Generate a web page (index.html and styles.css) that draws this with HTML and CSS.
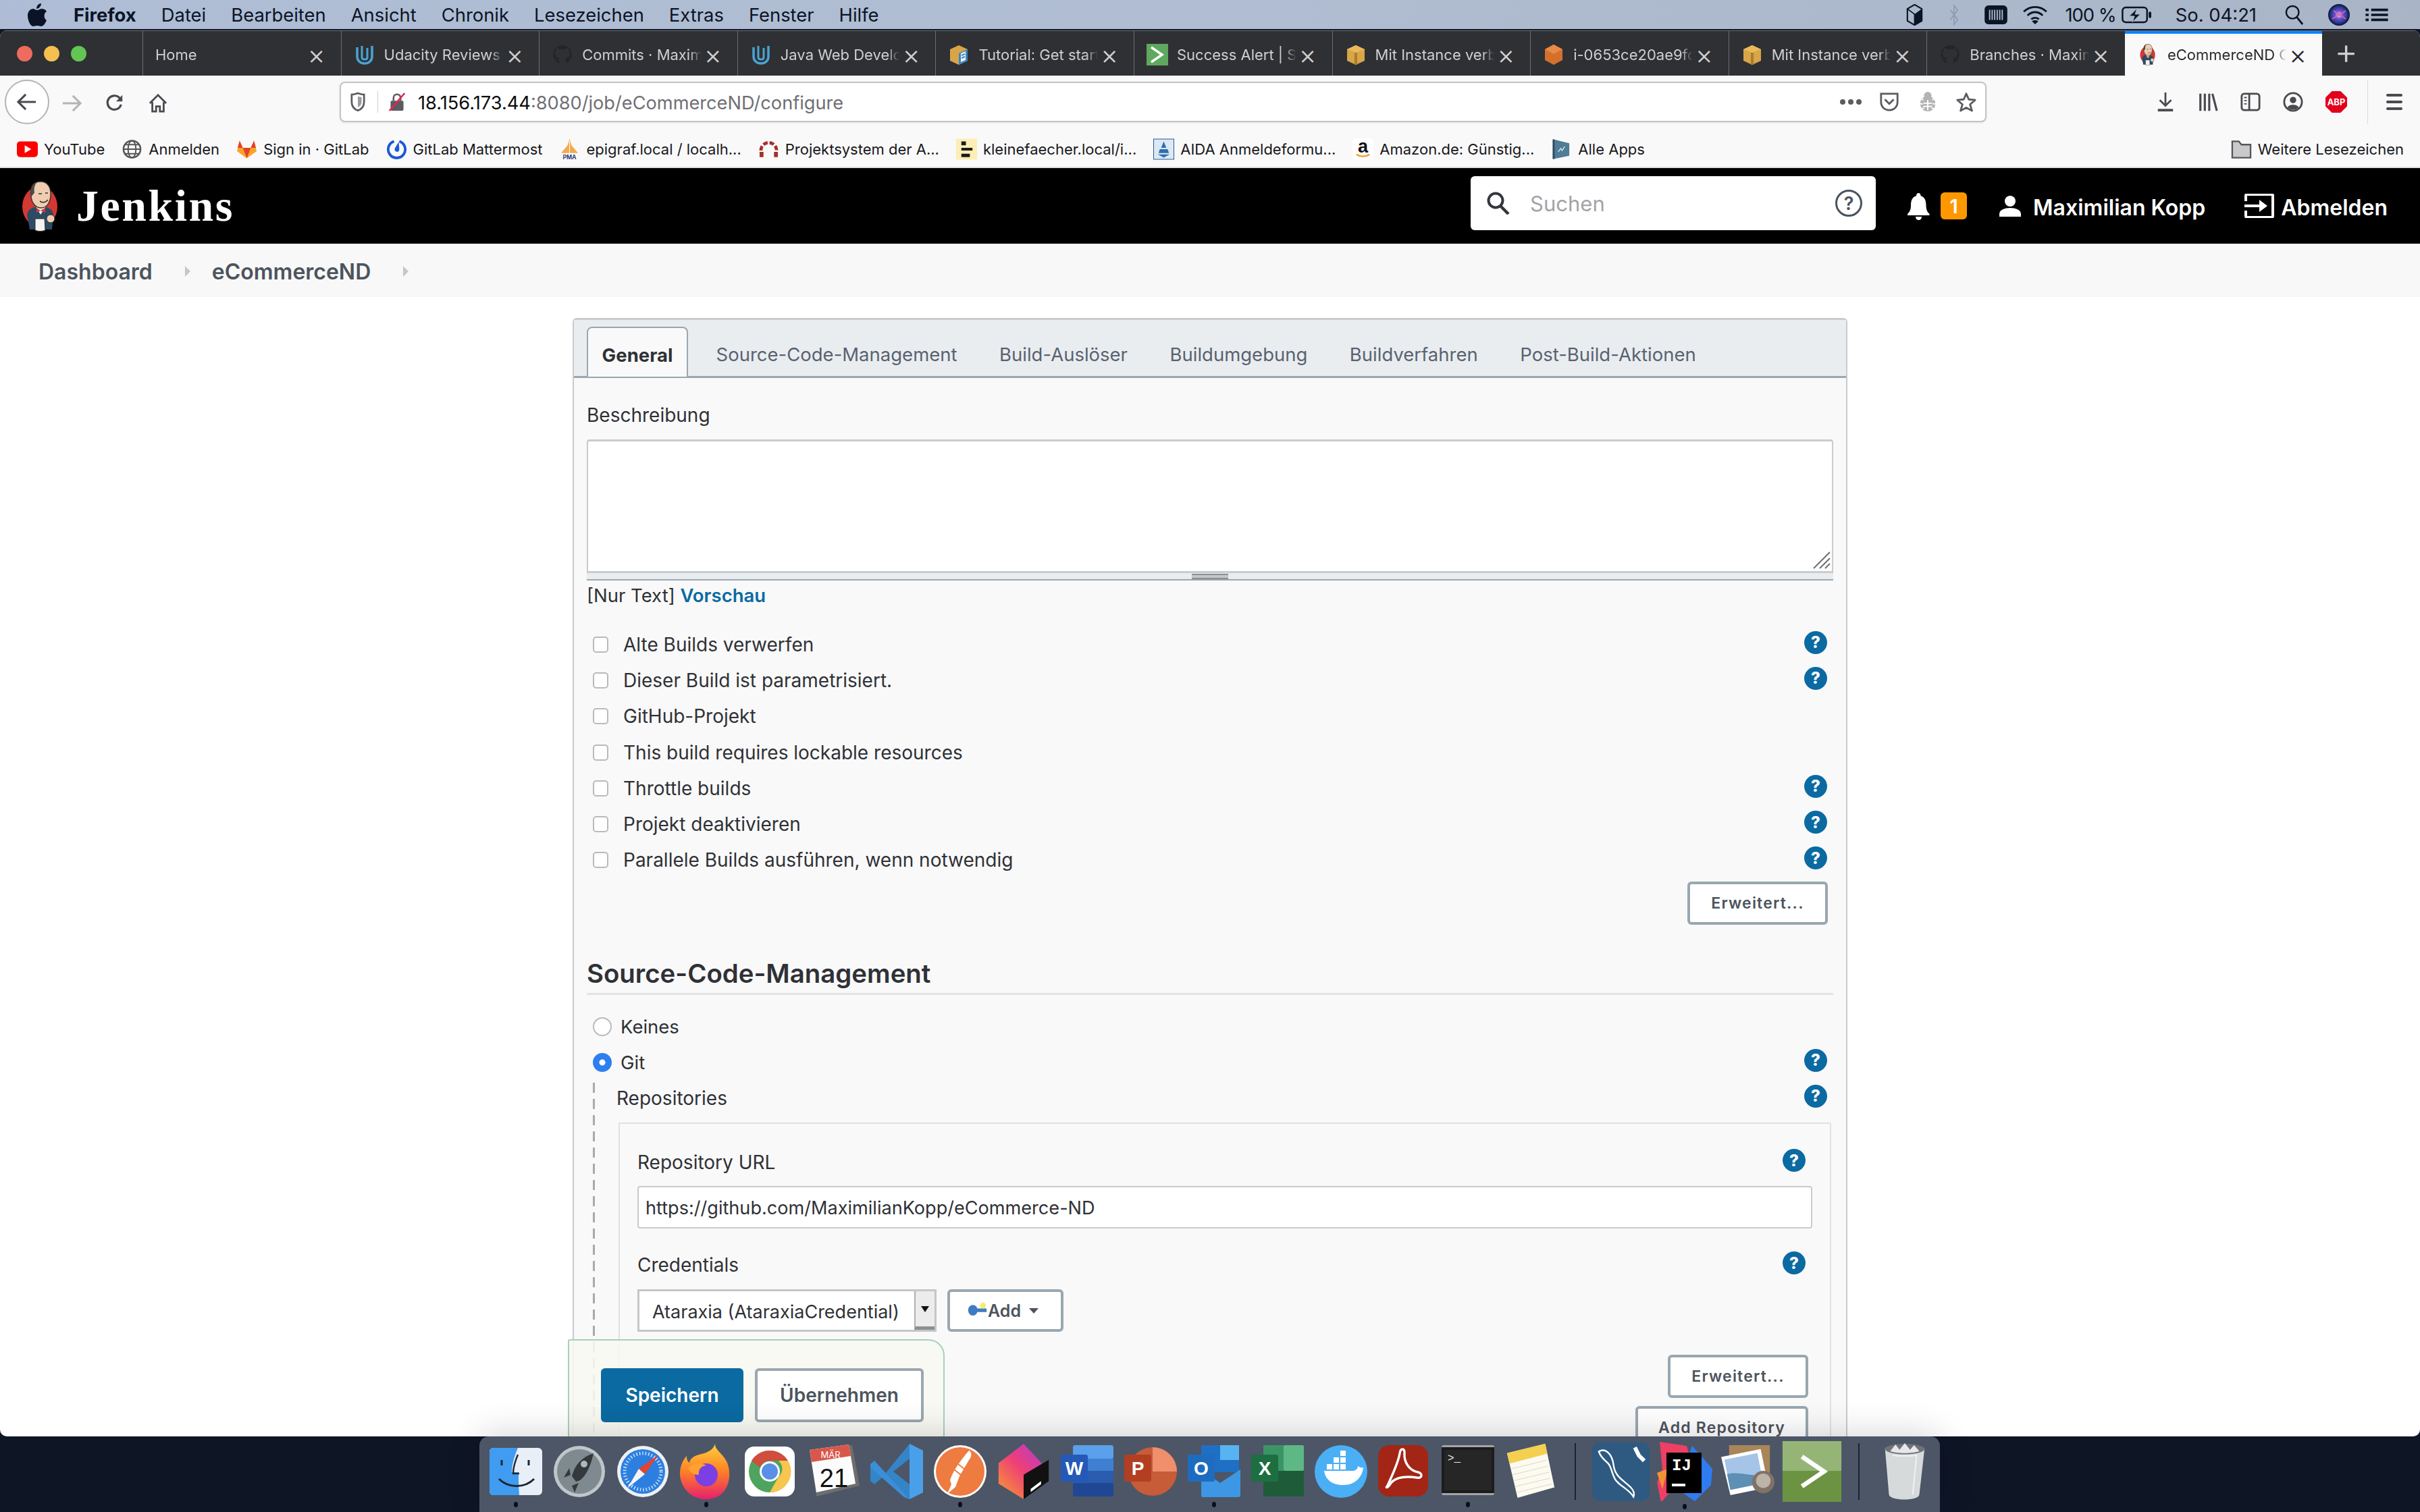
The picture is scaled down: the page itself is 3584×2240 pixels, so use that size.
FILE: index.html
```html
<!DOCTYPE html>
<html lang="de">
<head>
    <meta charset="UTF-8">
    <meta name="viewport" content="width=device-width, initial-scale=1.0">
    <title>eCommerceND Config - Jenkins</title>
    <link rel="stylesheet" href="styles.css">
</head>
<body>
<svg class="defs" width="0" height="0">
    <defs>
        <symbol id="fav-udacity" viewBox="0 0 32 32"><path d="M5 5v14c0 6 5 10 11 10s11-4 11-10V3" fill="none" stroke="#4aa3d4" stroke-width="3.5"/><path d="M12 3v17c0 2 2 3 4 3s4-1 4-3V6" fill="none" stroke="#4aa3d4" stroke-width="3"/></symbol>
        <symbol id="fav-github" viewBox="0 0 32 32"><path d="M16 2a14 14 0 0 0-5 27v-5c-4 1-5-2-5-2-1-2-2-2-2-2 2 0 3 2 3 2 1 2 3 1 4 1 0-1 1-2 1-2-3 0-7-2-7-7 0-2 1-3 2-4 0-1 0-2 0-4 0 0 2 0 4 2h10c2-2 4-2 4-2 0 2 0 3 0 4 1 1 2 2 2 4 0 5-4 7-7 7 0 0 1 1 1 3v5A14 14 0 0 0 16 2z" fill="#232629"/></symbol>
        <symbol id="fav-box" viewBox="0 0 32 32"><path d="M16 2l13 6v17l-13 6-13-6V8z" fill="#d8a548"/><path d="M16 2l13 6-13 5-13-5z" fill="#eab95c"/><path d="M14 13h4v18h-4z" fill="#a97e2e"/></symbol>
        <symbol id="fav-doc" viewBox="0 0 32 32"><path d="M16 2l13 6v17l-13 6-13-6V8z" fill="#d8a548"/><path d="M16 14l13-6v17l-13 6z" fill="#3b86c4"/><path d="M19 14l7-3v13l-7 3z" fill="#eef4f8"/><path d="M20 17l5-2M20 21l5-2" stroke="#3b86c4" stroke-width="2"/></symbol>
        <symbol id="fav-alert" viewBox="0 0 32 32"><rect width="32" height="32" fill="#5fa85f"/><path d="M7 5l16 11L7 27" fill="none" stroke="#fff" stroke-width="3.5"/></symbol>
        <symbol id="fav-cube" viewBox="0 0 32 32"><path d="M16 1l13 7v16l-13 7-13-7V8z" fill="#d4702c"/><path d="M16 1l13 7-13 7-13-7z" fill="#e88a48"/></symbol>
        <symbol id="jenkins" viewBox="0 0 54 75">
            <ellipse cx="26" cy="38" rx="26" ry="30" fill="#d33833"/>
            <path d="M7 50c2-9 9-12 19-12s20 3 20 13l-2 21H11z" fill="#2b4a66"/>
            <path d="M20 38l7 12 8-12z" fill="#f0ece4"/>
            <path d="M21 40l6 4 7-4v7l-7-3-6 3z" fill="#d33833"/>
            <path d="M13 23C11 8 17 1 27 1c10 0 16 8 15 21-1 11-6 18-14 18-8 0-14-7-15-17z" fill="#f0cdb0" stroke="#33302e" stroke-width="1.4"/>
            <path d="M13 24C11 10 15 3 22 2c-4 4-5 10-4 16-2 1-3 4-5 6z" fill="#4b4a48"/>
            <path d="M24 19h5M34 18h4M26 30c4 3 9 2 12-2" fill="none" stroke="#33302e" stroke-width="1.6"/>
            <path d="M19 56h14l1 17c-4 2-11 2-15 0z" fill="#f5f3ef" stroke="#33302e" stroke-width="1"/>
            <circle cx="42" cy="56" r="6" fill="#f0cdb0" stroke="#33302e" stroke-width="1"/>
        </symbol>
    </defs>
</svg>

<div class="screen">
    <!-- mac menu bar -->
    <header class="menubar">
        <svg class="apple" viewBox="0 0 28 34"><path d="M20 0c0 4-3 8-7 8 0-4 3-8 7-8zM14 10c2 0 4-2 7-2 3 0 5 1 7 4-5 3-4 11 0 13-2 5-5 9-8 9-2 0-3-1-6-1s-4 1-6 1c-4 0-8-9-8-16 0-6 4-10 8-10 2 0 4 2 6 2z" fill="#0b1426"/></svg>
        <nav class="menu-items">
            <span class="menu-app">Firefox</span>
            <span>Datei</span>
            <span>Bearbeiten</span>
            <span>Ansicht</span>
            <span>Chronik</span>
            <span>Lesezeichen</span>
            <span>Extras</span>
            <span>Fenster</span>
            <span>Hilfe</span>
        </nav>
        <div class="menu-status">
            <svg class="st-cube" viewBox="0 0 28 36"><path d="M14 1l12 7v20l-12 7-12-7V8z" fill="none" stroke="#0b1426" stroke-width="2.4"/><path d="M14 17l12-9v20l-12 7z" fill="#0b1426"/><path d="M2 8l12 9v18" fill="none" stroke="#0b1426" stroke-width="2"/></svg>
            <svg class="st-bt" viewBox="0 0 18 36"><path d="M3 10l12 16-6 8V2l6 8L3 26" fill="none" stroke="#8f9db4" stroke-width="2"/></svg>
            <svg class="st-bar" viewBox="0 0 36 30"><rect width="36" height="30" rx="6" fill="#0b1426"/><path d="M8 7v16M12 7v16M16 7v16M20 7v16M24 7v16M28 7v16" stroke="#aebccf" stroke-width="2"/></svg>
            <svg class="st-wifi" viewBox="0 0 40 32"><path d="M2 11c10-10 26-10 36 0M8 17c7-7 17-7 24 0M14 23c3-3 9-3 12 0" fill="none" stroke="#0b1426" stroke-width="3"/><path d="M20 31l-5-5c3-2 7-2 10 0z" fill="#0b1426"/></svg>
            <span class="st-pct">100 %</span>
            <svg class="st-batt" viewBox="0 0 46 26"><rect x="1.5" y="1.5" width="38" height="23" rx="5" fill="none" stroke="#0b1426" stroke-width="2.6"/><rect x="42" y="8" width="4" height="10" rx="2" fill="#0b1426"/><path d="M24 3L12 15h8l-3 9 12-12h-8z" fill="#0b1426" stroke="#aebccf"/></svg>
            <span class="st-clock">So. 04:21</span>
            <svg class="st-search" viewBox="0 0 30 32"><circle cx="12" cy="12" r="10" fill="none" stroke="#0b1426" stroke-width="2.6"/><path d="M19 20l9 11" stroke="#0b1426" stroke-width="3"/></svg>
            <svg class="st-siri" viewBox="0 0 32 32"><defs><radialGradient id="siri-grad"><stop offset="0" stop-color="#e8f2ff"/><stop offset=".35" stop-color="#7a4fd0"/><stop offset=".7" stop-color="#2c3f9e"/><stop offset="1" stop-color="#0c1430"/></radialGradient></defs><circle cx="16" cy="16" r="16" fill="url(#siri-grad)"/><path d="M6 22L26 10M8 10l18 12" stroke="#d75fa8" stroke-width="2"/></svg>
            <svg class="st-ctrl" viewBox="0 0 36 26"><path d="M0 3h5v4H0zM0 11h5v4H0zM0 19h5v4H0z" fill="#0b1426"/><path d="M9 3h27v4H9zM9 11h27v4H9zM9 19h27v4H9z" fill="#0b1426"/></svg>
        </div>
    </header>

    <div class="browser">
        <!-- tabs -->
        <div class="tabstrip">
            <div class="traffic-lights">
                <span class="light light-red"></span>
                <span class="light light-yellow"></span>
                <span class="light light-green"></span>
            </div>
            <div class="tab"><span class="tab-title">Home</span><span class="tab-close">&times;</span></div>
            <div class="tab"><svg class="favicon"><use href="#fav-udacity"/></svg><span class="tab-title">Udacity Reviews</span><span class="tab-close">&times;</span></div>
            <div class="tab"><svg class="favicon"><use href="#fav-github"/></svg><span class="tab-title">Commits · MaximilianKopp</span><span class="tab-close">&times;</span></div>
            <div class="tab"><svg class="favicon"><use href="#fav-udacity"/></svg><span class="tab-title">Java Web Developer</span><span class="tab-close">&times;</span></div>
            <div class="tab"><svg class="favicon"><use href="#fav-doc"/></svg><span class="tab-title">Tutorial: Get started</span><span class="tab-close">&times;</span></div>
            <div class="tab"><svg class="favicon"><use href="#fav-alert"/></svg><span class="tab-title">Success Alert | Spring</span><span class="tab-close">&times;</span></div>
            <div class="tab"><svg class="favicon"><use href="#fav-box"/></svg><span class="tab-title">Mit Instance verbinden</span><span class="tab-close">&times;</span></div>
            <div class="tab"><svg class="favicon"><use href="#fav-cube"/></svg><span class="tab-title">i-0653ce20ae9fd7</span><span class="tab-close">&times;</span></div>
            <div class="tab"><svg class="favicon"><use href="#fav-box"/></svg><span class="tab-title">Mit Instance verbinden</span><span class="tab-close">&times;</span></div>
            <div class="tab"><svg class="favicon"><use href="#fav-github"/></svg><span class="tab-title">Branches · MaximilianKopp</span><span class="tab-close">&times;</span></div>
            <div class="tab tab-active"><svg class="favicon"><use href="#jenkins"/></svg><span class="tab-title">eCommerceND Config</span><span class="tab-close">&times;</span></div>
            <span class="tab-new">+</span>
        </div>

        <!-- toolbar -->
        <div class="navbar">
            <span class="nav-back">
                <svg viewBox="0 0 32 30"><path d="M30 15H3M14 3L2 15l12 12" fill="none" stroke="#4a4a4f" stroke-width="3.4"/></svg>
            </span>
            <svg class="nav-icon nav-forward" viewBox="0 0 32 30"><path d="M2 15h27M18 3l12 12-12 12" fill="none" stroke="#b5b5b8" stroke-width="3.4"/></svg>
            <svg class="nav-icon nav-reload" viewBox="0 0 30 30"><path d="M25 17a11 11 0 1 1-3-11l4 4" fill="none" stroke="#4a4a4f" stroke-width="3.4"/><path d="M27 2v10H17z" fill="#4a4a4f"/></svg>
            <svg class="nav-icon nav-home" viewBox="0 0 30 30"><path d="M2 15L15 2l13 13M6 13v15h6v-8h6v8h6V13" fill="none" stroke="#4a4a4f" stroke-width="3"/></svg>
            <div class="urlbar">
                <svg class="url-shield" viewBox="0 0 24 32"><path d="M2 4c6 0 8-2 10-2s4 2 10 2v12c0 8-5 12-10 14C7 28 2 24 2 16z" fill="none" stroke="#5b5b60" stroke-width="3"/><path d="M12 7c3 1 4 1 6 1v8c0 5-3 7-6 9z" fill="#9a9aa0"/></svg>
                <span class="url-divider"></span>
                <svg class="url-lock" viewBox="0 0 30 32"><rect x="4" y="14" width="22" height="17" rx="2" fill="#5b5b60"/><path d="M9 14V9a6 6 0 0 1 12 0v5" fill="none" stroke="#5b5b60" stroke-width="3"/><path d="M2 31L28 1" stroke="#e22850" stroke-width="3"/></svg>
                <span class="url-text"><b>18.156.173.44</b>:8080/job/eCommerceND/configure</span>
                <div class="url-actions">
                    <span class="url-dots"><i></i><i></i><i></i></span>
                    <svg class="url-icon" viewBox="0 0 30 32"><path d="M2 3h26v13c0 8-6 13-13 13S2 24 2 16z" fill="none" stroke="#5b5b60" stroke-width="3"/><path d="M8 12l7 7 7-7" fill="none" stroke="#5b5b60" stroke-width="3"/></svg>
                    <svg class="url-icon" viewBox="0 0 30 32"><ellipse cx="15" cy="19" rx="12" ry="12" fill="#b4b4b6"/><circle cx="15" cy="6" r="6" fill="#b4b4b6"/><path d="M1 8l7 5M29 8l-7 5M0 19h7M30 19h-7M2 30l7-5M28 30l-7-5M8 18h14M8 23h14M15 13v16" stroke="#fff" stroke-width="2"/></svg>
                    <svg class="url-icon" viewBox="0 0 32 32"><path d="M16 3l4 9 10 1-8 7 3 10-9-5-9 5 3-10-8-7 10-1z" fill="none" stroke="#5b5b60" stroke-width="3" stroke-linejoin="round"/></svg>
                </div>
            </div>
            <div class="nav-tools">
                <svg class="tool-icon" viewBox="0 0 32 32"><path d="M16 1v20M7 13l9 9 9-9" fill="none" stroke="#4a4a4f" stroke-width="3"/><rect x="4" y="27" width="24" height="4" fill="#4a4a4f"/></svg>
                <svg class="tool-icon" viewBox="0 0 32 32"><path d="M4 3v27M11 3v27M18 3v27M23 3l7 27" stroke="#4a4a4f" stroke-width="3.4" fill="none"/></svg>
                <svg class="tool-icon" viewBox="0 0 32 32"><rect x="2" y="3" width="28" height="26" rx="4" fill="none" stroke="#4a4a4f" stroke-width="3"/><path d="M14 3v26" stroke="#4a4a4f" stroke-width="3"/><path d="M6 9h4M6 14h4M6 19h4" stroke="#4a4a4f" stroke-width="2"/></svg>
                <svg class="tool-icon" viewBox="0 0 32 32"><circle cx="16" cy="16" r="14" fill="none" stroke="#4a4a4f" stroke-width="3"/><circle cx="16" cy="13" r="5" fill="#4a4a4f"/><path d="M7 25c2-6 16-6 18 0a14 14 0 0 1-18 0z" fill="#4a4a4f"/></svg>
                <span class="abp">ABP</span>
                <span class="tool-divider"></span>
                <span class="hamburger"><i></i><i></i><i></i></span>
            </div>
        </div>

        <!-- bookmarks -->
        <div class="bookmarks">
            <span class="bm"><svg class="bm-icon" viewBox="0 0 32 32"><rect y="4" width="32" height="24" rx="5" fill="#f00"/><path d="M12 10l10 6-10 6z" fill="#fff"/></svg>YouTube</span>
            <span class="bm"><svg class="bm-icon" viewBox="0 0 32 32"><circle cx="16" cy="16" r="13" fill="none" stroke="#555" stroke-width="2.6"/><ellipse cx="16" cy="16" rx="6" ry="13" fill="none" stroke="#555" stroke-width="2"/><path d="M3 16h26M5 9h22M5 23h22" stroke="#555" stroke-width="2"/></svg>Anmelden</span>
            <span class="bm"><svg class="bm-icon" viewBox="0 0 32 32"><path d="M16 30L1 19 5 3l5 11h12l5-11 4 16z" fill="#fca326"/><path d="M16 30l-6-16h12z" fill="#e24329"/><path d="M5 3l5 11H2zM27 3l-5 11h8z" fill="#e24329"/></svg>Sign in · GitLab</span>
            <span class="bm"><svg class="bm-icon" viewBox="0 0 32 32"><path d="M20 4a13 13 0 1 1-8 0" fill="none" stroke="#1c58d9" stroke-width="4"/><path d="M19 5l1 11c0 6-8 5-7-1z" fill="#1c58d9"/></svg>GitLab Mattermost</span>
            <span class="bm"><svg class="bm-icon" viewBox="0 0 32 32"><path d="M16 0l3 10 10 12H3L13 10z" fill="#f6a94c"/><path d="M16 3v19" stroke="#fff" stroke-width="1"/><text x="16" y="31" class="bm-pma">PMA</text></svg>epigraf.local / localh...</span>
            <span class="bm"><svg class="bm-icon" viewBox="0 0 32 32"><path d="M4 18a12 12 0 0 1 24 0" fill="none" stroke="#a6302c" stroke-width="5" stroke-dasharray="7 3"/><path d="M2 20h6v8H2zM24 20h6v8h-6z" fill="#a6302c"/></svg>Projektsystem der A...</span>
            <span class="bm"><svg class="bm-icon" viewBox="0 0 32 32"><rect width="32" height="32" fill="#fdeeb5"/><path d="M8 4h7v6H8zM8 14h17v4H8zM8 23h13v5H8z" fill="#1c1c1c"/></svg>kleinefaecher.local/i...</span>
            <span class="bm"><svg class="bm-icon" viewBox="0 0 32 32"><rect x=".5" y=".5" width="31" height="31" fill="#dce8f3" stroke="#28528c"/><path d="M16 4l4 10H12zM10 16h12l2 6H8zM7 24h18l-9 5z" fill="#2f6fb0"/></svg>AIDA Anmeldeformu...</span>
            <span class="bm"><svg class="bm-icon" viewBox="0 0 32 32"><rect width="32" height="32" rx="4" fill="#fff"/><text x="16" y="21" class="bm-amazon">a</text><path d="M6 24c6 4 14 4 20 0" fill="none" stroke="#f29a1f" stroke-width="2.4"/></svg>Amazon.de: Günstig...</span>
            <span class="bm"><svg class="bm-icon" viewBox="0 0 32 32"><path d="M4 1l24 6v19L4 31z" fill="#4f7d96"/><path d="M4 1v30" stroke="#2d4a5c" stroke-width="3"/><path d="M11 20l4-5 2 3 4-6" fill="none" stroke="#cfe2ec" stroke-width="1.6"/></svg>Alle Apps</span>
            <span class="bm bm-more"><svg class="bm-icon" viewBox="0 0 32 32"><path d="M2 4h10l4 5h14v20H2z" fill="#c9c9cc" stroke="#55565a" stroke-width="2.4"/></svg>Weitere Lesezeichen</span>
        </div>

        <!-- jenkins page -->
        <header class="jk-header">
            <a class="jk-brand">
                <svg class="jk-logo"><use href="#jenkins"/></svg>
                <span class="jk-name">Jenkins</span>
            </a>
            <div class="jk-search">
                <svg class="jk-search-icon" viewBox="0 0 34 34"><circle cx="13" cy="13" r="10.5" fill="none" stroke="#33373d" stroke-width="4"/><path d="M20 21l12 12" stroke="#33373d" stroke-width="4.5"/></svg>
                <span class="jk-placeholder">Suchen</span>
                <span class="jk-search-help">?</span>
            </div>
            <svg class="jk-bell" viewBox="0 0 33 40"><path d="M16.5 0c2 0 3 2 3 4 6 2 8 7 8 14 0 7 2 10 5 13v2H0v-2c3-3 5-6 5-13 0-7 2-12 8-14 0-2 1-4 3.500-4z" fill="#fff"/><path d="M12 35h9c0 3-2 5-4.500 5S12 38 12 35z" fill="#fff"/></svg>
            <span class="jk-badge">1</span>
            <svg class="jk-user" viewBox="0 0 32 32"><circle cx="16" cy="9" r="8" fill="#fff"/><path d="M0 32v-4c0-6 8-9 16-9s16 3 16 9v4z" fill="#fff"/></svg>
            <span class="jk-label jk-username">Maximilian Kopp</span>
            <svg class="jk-logout" viewBox="0 0 44 36"><path d="M2 11V3a2 2 0 0 1 2-2h36a2 2 0 0 1 2 2v30a2 2 0 0 1-2 2H4a2 2 0 0 1-2-2v-8" fill="none" stroke="#fff" stroke-width="4"/><path d="M0 16h22v-7l12 9-12 9v-7H0z" fill="#fff"/></svg>
            <span class="jk-label">Abmelden</span>
        </header>

        <div class="breadcrumbs">
            <a class="crumb">Dashboard</a>
            <span class="crumb-sep"></span>
            <a class="crumb">eCommerceND</a>
            <span class="crumb-sep"></span>
        </div>

        <main class="page">
            <form class="config-panel">
                <div class="config-tabs">
                    <a class="config-tab config-tab-active">General</a>
                    <a class="config-tab">Source-Code-Management</a>
                    <a class="config-tab">Build-Auslöser</a>
                    <a class="config-tab">Buildumgebung</a>
                    <a class="config-tab">Buildverfahren</a>
                    <a class="config-tab">Post-Build-Aktionen</a>
                </div>

                <div class="config-body">
                    <label class="field-label desc-label">Beschreibung</label>
                    <div class="desc-wrap">
                        <textarea class="desc-input"></textarea>
                        <svg class="desc-resize" viewBox="0 0 26 26"><path d="M1 25L25 1M10 25L25 10M18 25l7-7" stroke="#6f6f6f" stroke-width="2" fill="none"/></svg>
                    </div>
                    <div class="desc-grip"><span></span></div>
                    <div class="desc-mode">[Nur Text] <a class="link">Vorschau</a></div>

                    <div class="options">
                        <label class="option"><input type="checkbox" class="check">Alte Builds verwerfen<a class="help">?</a></label>
                        <label class="option"><input type="checkbox" class="check">Dieser Build ist parametrisiert.<a class="help">?</a></label>
                        <label class="option"><input type="checkbox" class="check">GitHub-Projekt</label>
                        <label class="option"><input type="checkbox" class="check">This build requires lockable resources</label>
                        <label class="option"><input type="checkbox" class="check">Throttle builds<a class="help">?</a></label>
                        <label class="option"><input type="checkbox" class="check">Projekt deaktivieren<a class="help">?</a></label>
                        <label class="option"><input type="checkbox" class="check">Parallele Builds ausführen, wenn notwendig<a class="help">?</a></label>
                    </div>
                    <div class="btn-row btn-row-first"><button type="button" class="btn btn-small">Erweitert...</button></div>

                    <h2 class="section-title">Source-Code-Management</h2>
                    <label class="option option-radio"><input type="radio" name="scm" class="radio">Keines</label>
                    <label class="option option-radio"><input type="radio" name="scm" class="radio" checked>Git<a class="help">?</a></label>

                    <div class="git-block">
                        <div class="repos-head">Repositories<a class="help">?</a></div>
                        <div class="repo-box">
                            <div class="repo-label">Repository URL<a class="help">?</a></div>
                            <input class="text-input" type="text" value="https://github.com/MaximilianKopp/eCommerce-ND">
                            <div class="repo-label repo-label-second">Credentials<a class="help">?</a></div>
                            <div class="cred-row">
                                <div class="cred-select">
                                    <span class="cred-value">Ataraxia (AtaraxiaCredential)</span>
                                    <span class="cred-arrow"></span>
                                </div>
                                <button type="button" class="btn btn-add">
                                    <svg class="key-icon" viewBox="0 0 34 30"><ellipse cx="10" cy="14" rx="8" ry="9" fill="#3d7cc0"/><path d="M16 11h17v6H16z" fill="#3d7cc0"/><circle cx="27" cy="6" r="5" fill="#f5ec6a"/></svg>Add<span class="caret"></span>
                                </button>
                            </div>
                            <div class="btn-row btn-row-second"><button type="button" class="btn btn-small">Erweitert...</button></div>
                            <div class="btn-row btn-row-third"><button type="button" class="btn btn-small">Add Repository</button></div>
                        </div>
                    </div>
                </div>
            </form>
        </main>

        <div class="save-bar">
            <button type="button" class="save-btn save-primary">Speichern</button>
            <button type="button" class="save-btn save-apply">Übernehmen</button>
        </div>
    </div>

    <!-- dock -->
    <footer class="dock">
        <span class="dock-item running"><svg viewBox="0 0 78 78"><rect y="4" width="78" height="70" rx="6" fill="#e8eff7"/><path d="M6 4h36c-6 14-9 26-9 36h10c0 12 0 22 1 34H6a6 6 0 0 1-6-6V10a6 6 0 0 1 6-6z" fill="#3f9cf0"/><path d="M18 22v8M58 22v8" stroke="#1c2733" stroke-width="3"/><path d="M14 50c14 14 38 14 52 0" fill="none" stroke="#1c2733" stroke-width="3"/><path d="M42 14c-5 12-7 22-7 28h9" fill="none" stroke="#1c2733" stroke-width="2.4"/></svg></span>
        <span class="dock-item"><svg viewBox="0 0 78 82"><circle cx="39" cy="41" r="38" fill="#bfc6c9"/><circle cx="39" cy="41" r="33" fill="#7e8a8f"/><path d="M60 14c-4 18-10 32-20 40l-6 2-6-8c4-16 14-28 32-34zM26 46l-10 4 8-14zM38 58l-6 14-4-10z" fill="#33393d"/><circle cx="46" cy="30" r="5" fill="#aeb7bb"/></svg></span>
        <span class="dock-item"><svg viewBox="0 0 78 82"><circle cx="39" cy="41" r="38" fill="#eef1f3"/><circle cx="39" cy="41" r="33" fill="#2c7fe0"/><circle cx="39" cy="41" r="27" fill="none" stroke="#cfe3fa" stroke-width="5" stroke-dasharray="1.500 3"/><path d="M62 16L42 45 33 37z" fill="#e4432f"/><path d="M16 66l26-21-9-8z" fill="#f4f4f4"/></svg></span>
        <span class="dock-item running"><svg viewBox="0 0 78 82"><defs><linearGradient id="ff-grad" x1="0" y1="0" x2="0" y2="1"><stop offset="0" stop-color="#ffd23a"/><stop offset=".5" stop-color="#ff7f27"/><stop offset="1" stop-color="#e6206e"/></linearGradient></defs><path d="M52 0c0 10 12 14 18 28 8 20 2 54-32 54C14 82 0 62 0 44c0-10 4-20 10-26 0 5 1 8 4 10 2-10 14-12 22-14 6-2 14-6 16-14z" fill="url(#ff-grad)"/><circle cx="39" cy="46" r="17" fill="#7b3fe4"/><path d="M12 36c8-8 20-8 27-4-8 1-12 6-11 14-8 0-13-4-16-10z" fill="#ffa12e"/></svg></span>
        <span class="dock-item"><svg viewBox="0 0 78 78"><rect width="74" height="74" x="2" y="2" rx="14" fill="#fff"/><circle cx="39" cy="39" r="31" fill="#4ea45f"/><path d="M39 8a31 31 0 0 1 27 15H39a16 16 0 0 0-15 10L12 23A31 31 0 0 1 39 8z" fill="#d14d3e"/><path d="M66 23a31 31 0 0 1-27 47l13-23a16 16 0 0 0 0-24z" fill="#f6c64e"/><circle cx="39" cy="39" r="15" fill="#fff"/><circle cx="39" cy="39" r="12" fill="#5a8fe8"/></svg></span>
        <span class="dock-item"><svg viewBox="0 0 78 82"><path d="M5 12l62-10 11 60-64 16z" fill="#6e6e6e"/><path d="M4 9L62 1l10 58-58 13z" fill="#fcfcfc"/><path d="M4 9L62 1l3 17L7 27z" fill="#d9574a"/><text x="35" y="21" class="cal-month">MÄR</text><text x="40" y="64" class="cal-day">21</text></svg></span>
        <span class="dock-item"><svg viewBox="0 0 78 82"><path d="M58 0l20 10v62L58 82 22 46 6 60 0 55V35l6-5 16 14z" fill="#3484c8"/><path d="M58 0l20 10v62L58 82z" fill="#4aa0e8"/><path d="M0 30l6-5 52 57-8-3L0 35z" fill="#3a8fd8"/><path d="M58 22L34 41l24 19z" fill="#4c5667"/></svg></span>
        <span class="dock-item running"><svg viewBox="0 0 78 82"><circle cx="39" cy="41" r="39" fill="#fff"/><circle cx="39" cy="41" r="36" fill="#ee7b3f"/><path d="M52 10c5 2 4 10 0 14L38 48l-6 16-12 10 6-14-2-6c4-14 16-30 28-44z" fill="#fff"/><path d="M30 38l10 8M36 30l10 8" stroke="#ee7b3f" stroke-width="2"/></svg></span>
        <span class="dock-item"><svg viewBox="0 0 78 86"><defs><linearGradient id="tb-grad" x1="0" y1="1" x2="1" y2="0"><stop offset="0" stop-color="#f7a12a"/><stop offset=".5" stop-color="#ef3f76"/><stop offset="1" stop-color="#a93be0"/></linearGradient></defs><path d="M39 0l39 42-39 44L0 62V30z" fill="url(#tb-grad)"/><path d="M39 86V48l39-23v33z" fill="#111"/><path d="M50 70l16-12v5L50 75z" fill="#fff"/></svg></span>
        <span class="dock-item"><svg viewBox="0 0 78 78"><rect x="18" width="60" height="76" rx="3" fill="#2b5cad"/><rect x="18" width="60" height="20" rx="3" fill="#5aa0ea"/><rect x="18" y="20" width="60" height="18" fill="#3f7fd2"/><rect x="18" y="56" width="60" height="20" rx="3" fill="#1f4794"/><rect y="14" width="40" height="40" rx="3" fill="#2459b8"/><text x="20" y="44" class="office-letter">W</text></svg></span>
        <span class="dock-item"><svg viewBox="0 0 78 78"><circle cx="42" cy="39" r="36" fill="#c65c38"/><path d="M42 3a36 36 0 0 1 36 36H42z" fill="#f08f6c"/><rect y="14" width="40" height="40" rx="3" fill="#b23f22"/><text x="20" y="44" class="office-letter">P</text></svg></span>
        <span class="dock-item running"><svg viewBox="0 0 78 78"><rect x="20" width="56" height="40" fill="#1f6fc4"/><path d="M48 0h28v22H48z" fill="#57b4f0"/><path d="M20 36l28 20 30-20v38a3 3 0 0 1-3 3H23a3 3 0 0 1-3-3z" fill="#3d97e4"/><rect y="14" width="40" height="40" rx="3" fill="#1e6cc0"/><text x="20" y="44" class="office-letter">O</text></svg></span>
        <span class="dock-item"><svg viewBox="0 0 78 78"><rect x="18" width="60" height="76" rx="3" fill="#1f7a4c"/><rect x="48" width="30" height="38" rx="2" fill="#5db884"/><rect x="18" width="30" height="38" fill="#3a9566"/><rect x="18" y="38" width="60" height="38" fill="#1e5c39"/><rect y="14" width="40" height="40" rx="3" fill="#1d6f42"/><text x="20" y="44" class="office-letter">X</text></svg></span>
        <span class="dock-item"><svg viewBox="0 0 78 82"><circle cx="39" cy="41" r="39" fill="#4baff5"/><path d="M14 40h44c3-1 6-3 6-7 3 2 6 3 8 2-1 12-10 26-30 26-15 0-26-7-28-21z" fill="#fff"/><path d="M18 30h8v8h-8zM28 30h8v8h-8zM38 30h8v8h-8zM28 20h8v8h-8zM38 20h8v8h-8zM38 10h8v8h-8z" fill="#fff"/></svg></span>
        <span class="dock-item"><svg viewBox="0 0 78 78"><rect width="74" height="76" rx="16" fill="#a32515"/><path d="M14 60c6-14 16-34 18-48 1-8 8-8 7 0-1 14 8 26 20 28 8 2 6 10-2 8-12-2-30-2-38 8-5 8-9 8-5 4z" fill="none" stroke="#fff" stroke-width="3.4"/></svg></span>
        <span class="dock-item running"><svg viewBox="0 0 78 78"><rect width="78" height="74" rx="3" fill="#a5a5a5"/><rect y="3" width="78" height="68" fill="#1c1c1c"/><rect x="4" y="7" width="70" height="60" fill="#262626"/><text x="9" y="24" class="term-prompt">&gt;_</text></svg></span>
        <span class="dock-item"><svg viewBox="0 0 78 84"><path d="M2 14L60 0l14 66-56 16z" fill="#fdfbf0"/><path d="M2 14L60 0l3 15-57 15z" fill="#f5cf4f"/><path d="M8 38l54-13M10 47l54-13M12 56l54-13M14 65l54-13M16 74l54-13" stroke="#d7d7d0"/></svg></span>
        <span class="dock-sep"></span>
        <span class="dock-item dock-wide"><svg viewBox="0 0 86 88"><rect width="86" height="88" rx="12" fill="#2e5a82"/><path d="M10 14c10-6 20 4 22 20 2 18 14 22 26 34 4 4 6 10 4 14-6-10-16-14-24-22-8-6-8-22-14-28-6-6-12-10-14-18z" fill="none" stroke="#fff" stroke-width="2.4"/><path d="M64 8l6 12 8 8" fill="none" stroke="#fff" stroke-width="6"/></svg></span>
        <span class="dock-item dock-ij running"><svg viewBox="0 0 82 88"><path d="M4 0l40 6 8 30-46 54-6-30 8-20z" fill="#ee3f64"/><path d="M52 6l30 34-2 24-24 24-26-18z" fill="#2e7cf0"/><path d="M0 46l16-6-8 30z" fill="#f29434"/><rect x="14" y="16" width="52" height="60" fill="#000"/><text x="22" y="42" class="ij-mark">IJ</text><rect x="22" y="62" width="20" height="4" fill="#fff"/></svg></span>
        <span class="dock-item dock-preview"><svg viewBox="0 0 82 80"><rect x="12" y="0" width="62" height="60" fill="#a8865a"/><path d="M0 18l60-12 12 58-58 12z" fill="#fff"/><path d="M5 22l50-10 9 46-50 10z" fill="#a6c3e8"/><path d="M9 44c16-4 30 2 51 2l2 12-48 10z" fill="#5e8fb4"/><circle cx="64" cy="56" r="17" fill="#817266"/><circle cx="64" cy="54" r="11" fill="#bdb3a8"/></svg></span>
        <span class="dock-item dock-green"><svg viewBox="0 0 91 94"><rect width="91" height="94" fill="#6b9342"/><rect width="91" height="46" fill="#95b577"/><path d="M30 24l34 23-34 23" fill="none" stroke="#fff" stroke-width="7"/></svg></span>
        <span class="dock-sep dock-sep-last"></span>
        <span class="dock-item dock-trash"><svg viewBox="0 0 63 86"><path d="M2 8c10-8 50-8 60 0L54 78c-1 10-44 10-46 0z" fill="#d7dadb"/><ellipse cx="32" cy="9" rx="30" ry="8" fill="#6e7378"/><path d="M10 12l8-10 6 8 8-10 8 10 6-7 8 9c-8 4-36 4-44 0z" fill="#e6e7e8"/><path d="M14 18c4 2 30 2 36 0l-6 60" fill="none" stroke="#f0f1f2" stroke-width="2"/></svg></span>
    </footer>
</div>
</body>
</html>
```

FILE: styles.css
```css
* {
    box-sizing: border-box;
}

html, body {
    margin: 0;
    padding: 0;
}

body {
    font-family: Inter, "Noto Sans", sans-serif;
    color: #2f3136;
}

.defs {
    display: block;
    height: 0;
}

.screen {
    position: relative;
    width: 3584px;
    height: 2240px;
    overflow: hidden;
    display: flex;
    flex-direction: column;
    background: #0e1525;
}

/* menu bar */
.menubar {
    display: flex;
    align-items: center;
    height: 45px;
    flex: none;
    padding: 0 46px 0 41px;
    background: linear-gradient(90deg, #aebdd5, #b0bdd2 50%, #a9b5c7);
    border-bottom: 2px solid #10172a;
    font-size: 27.400px;
    color: #0b1426;
}

.apple {
    width: 28px;
    height: 34px;
    margin-right: 40px;
}

.menu-items {
    display: flex;
    gap: 37px;
}

.menu-app {
    font-weight: 700;
}

.menu-status {
    display: flex;
    align-items: center;
    margin-left: auto;
}

.st-cube { width: 27px; height: 32px; margin-right: 36px; }
.st-bt { width: 18px; height: 32px; margin-right: 35px; }
.st-bar { width: 36px; height: 28px; margin-right: 21px; }
.st-wifi { width: 38px; height: 30px; margin-right: 25px; }
.st-pct { margin-right: 8px; letter-spacing: -1px; }
.st-batt { width: 44px; height: 26px; margin-right: 36px; }
.st-clock { margin-right: 42px; }
.st-search { width: 28px; height: 30px; margin-right: 36px; }
.st-siri { width: 32px; height: 32px; margin-right: 22px; }
.st-ctrl { width: 36px; height: 24px; }

/* browser window */
.browser {
    position: relative;
    flex: none;
    height: 2083px;
    overflow: hidden;
    background: #fff;
    border-radius: 10px 10px 10px 10px;
}

.tabstrip {
    display: flex;
    height: 67px;
    background: #2f3033;
    border-top: 1px solid #6e6e70;
    font-size: 22px;
    color: #cfcfd0;
}

.traffic-lights {
    display: flex;
    align-items: center;
    gap: 17px;
    width: 212px;
    padding-left: 25px;
    border-right: 1px solid #6e6e70;
}

.light {
    width: 23px;
    height: 23px;
    border-radius: 50%;
}

.light-red { background: #ee6b5f; }
.light-yellow { background: #f5bf4f; }
.light-green { background: #62c554; }

.tab {
    display: flex;
    align-items: center;
    width: 293.6px;
    padding: 4px 25px 0 18px;
    border-right: 1px solid #6e6e70;
}

.tab-active {
    width: 292px;
    margin-left: -1px;
    background: #f9f9fa;
    border-top: 4px solid #0a84ff;
    border-right: 0;
    color: #2b2b2e;
    padding-top: 0;
}

.favicon {
    width: 32px;
    height: 32px;
    flex: none;
    margin-right: 13px;
}

.tab-title {
    flex: 1;
    white-space: nowrap;
    overflow: hidden;
    -webkit-mask-image: linear-gradient(90deg, #000 90%, transparent 100%);
    mask-image: linear-gradient(90deg, #000 90%, transparent 100%);
}

.tab-close {
    flex: none;
    width: 24px;
    margin-left: 4px;
    font-size: 40px;
    font-weight: 300;
    line-height: 1;
    text-align: center;
}

.tab-new {
    margin-left: 18px;
    font-size: 54px;
    font-weight: 300;
    line-height: 60px;
    color: #d0d0d0;
}

.navbar {
    display: flex;
    align-items: center;
    height: 78px;
    padding: 0 0 0 7px;
    background: #f9f9fa;
}

.nav-back {
    display: flex;
    align-items: center;
    justify-content: center;
    width: 66px;
    height: 66px;
    border: 2px solid #b4b4b4;
    border-radius: 50%;
    background: #fff;
}

.nav-back svg {
    width: 30px;
    height: 28px;
}

.nav-icon {
    width: 30px;
    height: 28px;
    flex: none;
    margin-top: 3px;
}

.nav-forward { margin-left: 18px; }
.nav-reload { margin-left: 34px; }
.nav-home { margin-left: 34px; }

.urlbar {
    display: flex;
    align-items: center;
    width: 2439px;
    height: 60px;
    margin-left: 254px;
    padding: 0 12px 0 14px;
    background: #fff;
    border: 2px solid #c4c4c4;
    border-radius: 8px;
    box-shadow: 0 1px 3px rgba(0, 0, 0, 0.1);
}

.url-shield {
    width: 22px;
    height: 30px;
}

.url-divider {
    width: 1px;
    height: 32px;
    margin: 0 15px 0 18px;
    background: #d0d0d0;
}

.url-lock {
    width: 26px;
    height: 30px;
    margin-right: 18px;
}

.url-text {
    padding-top: 3px;
    font-size: 27.200px;
    color: #6f6f74;
    white-space: nowrap;
}

.url-text b {
    font-weight: 400;
    color: #0c0c0d;
}

.url-actions {
    display: flex;
    align-items: center;
    gap: 25px;
    margin-left: auto;
}

.url-dots {
    display: flex;
    gap: 4px;
    margin-right: 0;
}

.url-dots i {
    width: 8px;
    height: 8px;
    border-radius: 50%;
    background: #5b5b60;
}

.url-icon {
    width: 32px;
    height: 30px;
}

.nav-tools {
    display: flex;
    align-items: center;
    gap: 33px;
    margin-left: 250px;
}

.tool-icon {
    width: 30px;
    height: 30px;
}

.abp {
    display: flex;
    align-items: center;
    justify-content: center;
    width: 32px;
    height: 32px;
    background: #e3001b;
    clip-path: polygon(30% 0, 70% 0, 100% 30%, 100% 70%, 70% 100%, 30% 100%, 0 70%, 0 30%);
    font-size: 13px;
    font-weight: 700;
    color: #fff;
}

.tool-divider {
    width: 1px;
    height: 66px;
    margin-left: -3px;
    background: #dcdcdc;
}

.hamburger {
    display: flex;
    flex-direction: column;
    gap: 6px;
    margin-left: -6px;
}

.hamburger i {
    width: 24px;
    height: 4px;
    border-radius: 2px;
    background: #4a4a4f;
}

.bookmarks {
    display: flex;
    align-items: center;
    gap: 25px;
    height: 59px;
    padding: 5px 24px 0 25px;
    background: #f9f9fa;
    border-bottom: 2px solid #e0e0e2;
    font-size: 22px;
    color: #18181a;
    white-space: nowrap;
}

.bm {
    display: flex;
    align-items: center;
    gap: 9px;
}

.bm-icon {
    width: 31px;
    height: 32px;
    flex: none;
}

.bm-pma {
    font-size: 9px;
    font-weight: 700;
    fill: #33417a;
    text-anchor: middle;
}

.bm-amazon {
    font-family: "Liberation Sans", sans-serif;
    font-size: 28px;
    font-weight: 700;
    fill: #111;
    text-anchor: middle;
}

.bm-more {
    margin-left: auto;
}

/* jenkins header */
.jk-header {
    display: flex;
    align-items: center;
    height: 112px;
    padding: 0 48px 0 32px;
    background: #000;
    color: #fff;
}

.jk-brand {
    display: flex;
    align-items: center;
    gap: 25px;
}

.jk-logo {
    width: 56px;
    height: 75px;
}

.jk-name {
    font-family: "Liberation Serif", serif;
    font-size: 66px;
    font-weight: 700;
    letter-spacing: 2.500px;
}

.jk-search {
    display: flex;
    align-items: center;
    width: 600px;
    height: 80px;
    margin: 0 47px 8px auto;
    padding: 0 20px 0 24px;
    background: #fff;
    border-radius: 6px;
}

.jk-search-icon {
    width: 34px;
    height: 34px;
}

.jk-placeholder {
    margin-left: 30px;
    font-size: 31px;
    color: #a3a4a8;
}

.jk-search-help {
    display: flex;
    align-items: center;
    justify-content: center;
    width: 40px;
    height: 40px;
    margin-left: auto;
    border: 3.500px solid #4b5360;
    border-radius: 50%;
    font-size: 27px;
    font-weight: 600;
    color: #4b5360;
}

.jk-bell {
    width: 33px;
    height: 40px;
    margin-top: 2px;
}

.jk-badge {
    display: flex;
    align-items: center;
    justify-content: center;
    width: 39px;
    height: 40px;
    margin-left: 16px;
    background: #ff9800;
    border-radius: 6px;
    font-size: 29px;
    font-weight: 600;
}

.jk-user {
    width: 32px;
    height: 32px;
    margin-left: 48px;
}

.jk-label {
    margin-top: 4px;
    font-size: 32px;
    font-weight: 600;
}

.jk-username {
    margin-left: 18px;
}

.jk-logout {
    width: 44px;
    height: 36px;
    margin: 0 10px 0 58px;
}

/* breadcrumb */
.breadcrumbs {
    display: flex;
    align-items: center;
    height: 79px;
    padding: 3px 0 0 57px;
    background: #f8f8f8;
    font-size: 32px;
    font-weight: 600;
    color: #4d545d;
}

.crumb-sep {
    width: 0;
    height: 0;
    margin: 0 32px 0 48px;
    border-left: 8px solid #c4c7cb;
    border-top: 8px solid transparent;
    border-bottom: 8px solid transparent;
}

/* config form */
.page {
    display: flex;
    justify-content: center;
    padding-top: 31px;
}

.config-panel {
    width: 1888px;
    background: #f9f9f9;
    border: 2px solid #c9cbcd;
    border-top-width: 3px;
    border-bottom: 0;
    border-radius: 6px 6px 0 0;
    font-size: 28px;
    color: #2f3136;
}

.config-tabs {
    display: flex;
    align-items: flex-end;
    gap: 62.500px;
    height: 86px;
    padding-left: 19px;
    background: #e9edf0;
    border-bottom: 3px solid #9aa7b0;
    font-size: 27.500px;
    color: #5a6270;
}

.config-tab {
    height: 56px;
    line-height: 48px;
}

.config-tab-active {
    width: 150px;
    height: 74px;
    margin-right: -21px;
    margin-bottom: -1px;
    border: 2px solid #9aa7b0;
    border-bottom: 0;
    border-radius: 8px 8px 0 0;
    background: #f9f9f9;
    line-height: 81px;
    font-weight: 700;
    text-align: center;
    color: #2f3136;
}

.config-body {
    padding: 0 19px 0 19px;
}

.desc-label {
    display: block;
    padding-top: 35px;
    line-height: 40px;
}

.desc-wrap {
    position: relative;
    margin-top: 16px;
}

.desc-input {
    display: block;
    width: 100%;
    height: 198px;
    padding: 12px;
    background: #fff;
    border: 2px solid #c9cbcd;
    border-top-width: 3px;
    border-bottom-width: 3px;
    border-radius: 4px 4px 0 0;
    resize: none;
}

.desc-resize {
    position: absolute;
    right: 4px;
    bottom: 6px;
    width: 26px;
    height: 26px;
}

.desc-grip {
    display: flex;
    justify-content: center;
    height: 11px;
    background: #e9edf0;
    border-bottom: 2px solid #9aa7b0;
}

.desc-grip span {
    width: 54px;
    height: 8px;
    margin-top: 1px;
    border-top: 2px solid #8a8f93;
    border-bottom: 2px solid #8a8f93;
    background: #c5c7c8;
}

.desc-mode {
    font-size: 27.500px;
    line-height: 44px;
}

.link {
    font-weight: 600;
    color: #0b6aa2;
}

.options {
    margin-top: 24px;
}

.option {
    display: flex;
    align-items: center;
    height: 53.300px;
    padding-right: 9px;
}

.check {
    appearance: none;
    width: 23px;
    height: 24px;
    margin: 0 22px 0 9px;
    background: #fff;
    border: 2px solid #b9babc;
    border-radius: 5px;
}

.help {
    display: flex;
    align-items: center;
    justify-content: center;
    width: 34px;
    height: 34px;
    margin: -6px 0 0 auto;
    border-radius: 50%;
    background: #0b6aa2;
    font-size: 24px;
    font-weight: 800;
    color: #fff;
}

.btn-row {
    display: flex;
    justify-content: flex-end;
}

.btn-row-first {
    margin: 5px 8px 0 0;
}

.btn {
    display: flex;
    align-items: center;
    justify-content: center;
    background: #fff;
    border: 4px solid #9aa7b0;
    border-radius: 6px;
    font-family: inherit;
    color: #4d545d;
}

.btn-small {
    height: 64px;
    padding: 0 30px;
    min-width: 208px;
    font-size: 23px;
    font-weight: 600;
    letter-spacing: 1.200px;
}

.section-title {
    margin: 49px 0 0;
    padding-bottom: 5px;
    border-bottom: 3px solid #e3e3e3;
    font-size: 38.400px;
    font-weight: 600;
    line-height: 47px;
    color: #2f3136;
}

.section-title + .option-radio {
    margin-top: 20px;
}

.option-radio {
    height: 53px;
    font-size: 27.500px;
}

.radio {
    appearance: none;
    width: 28px;
    height: 28px;
    margin: 0 13px 0 9px;
    background: #fff;
    border: 2px solid #b9babc;
    border-radius: 50%;
}

.radio:checked {
    background: radial-gradient(circle, #fff 0 4px, #2e7fef 5px);
    border-color: #2e7fef;
}

.git-block {
    margin-left: 9px;
    padding: 0 0 200px 35px;
    background: repeating-linear-gradient(#a9a9a9 0 15px, transparent 15px 24px) 0 4px / 3px 100% no-repeat;
}

.repos-head {
    display: flex;
    align-items: center;
    height: 53px;
    padding-right: 9px;
}

.repo-box {
    height: 560px;
    margin: 10px 3px 0 3px;
    padding: 33px 26px 0;
    border: 2px solid #e1e1e1;
    border-bottom: 0;
}

.repo-label {
    display: flex;
    align-items: center;
    height: 48px;
    margin-bottom: 11px;
    padding-right: 10px;
}

.repo-label-second {
    margin: 30px 0 12px;
}

.text-input {
    display: block;
    width: 100%;
    height: 63px;
    padding: 2px 10px 0;
    background: #fff;
    border: 2.500px solid #c9cbcd;
    border-radius: 4px;
    font-family: inherit;
    font-size: 27.100px;
    color: #2f3136;
}

.cred-row {
    display: flex;
    gap: 16px;
}

.cred-select {
    display: flex;
    justify-content: space-between;
    width: 443px;
    height: 63px;
    background: #fff;
    border: 3px solid #c4c6c8;
}

.cred-value {
    padding-left: 19px;
    font-size: 27px;
    line-height: 62px;
    white-space: nowrap;
}

.cred-arrow {
    position: relative;
    display: flex;
    align-items: center;
    justify-content: center;
    width: 30px;
    background: #ececec;
    border-left: 2px solid #b0b0b0;
    border-bottom: 5px solid #8f8f8f;
}

.cred-arrow::after {
    content: "";
    border-top: 9px solid #111;
    border-left: 6px solid transparent;
    border-right: 6px solid transparent;
}

.btn-add {
    width: 172px;
    height: 63px;
    padding: 0 8px 0 0;
    font-size: 25px;
    font-weight: 600;
}

.key-icon {
    width: 30px;
    height: 28px;
    margin-right: 1px;
}

.caret {
    margin-left: 12px;
    border-top: 8px solid #4d545d;
    border-left: 7px solid transparent;
    border-right: 7px solid transparent;
}

.btn-row-second {
    margin: 34px 6px 0 0;
}

.btn-row-third {
    margin: 12px 6px 0 0;
}

/* sticky save bar, lies over the form */
.save-bar {
    position: absolute;
    left: 841px;
    top: 1939px;
    display: flex;
    gap: 17px;
    width: 558px;
    height: 160px;
    padding: 41px 0 0 47px;
    background: rgba(247, 248, 240, 0.88);
    border: 2px solid #a9d0bb;
    border-radius: 3px 24px 0 0;
}

.save-btn {
    height: 80px;
    border-radius: 6px;
    font-family: inherit;
    font-size: 28px;
    font-weight: 600;
}

.save-primary {
    width: 211px;
    background: #0b6aa2;
    border: 0;
    color: #fff;
}

.save-apply {
    width: 250px;
    background: #fff;
    border: 4px solid #9aa7b0;
    color: #4d545d;
}

/* dock */
.dock {
    position: absolute;
    left: 710px;
    bottom: 0;
    display: flex;
    align-items: center;
    gap: 16px;
    width: 2163px;
    height: 112px;
    padding: 0 0 8px 15px;
    background: #4c5667;
    border-radius: 14px 14px 0 0;
    box-shadow: 0 -4px 50px rgba(0, 0, 0, 0.16);
}

.dock-item {
    position: relative;
    display: block;
    width: 78px;
    height: 82px;
    flex: none;
}

.dock-item svg {
    display: block;
    width: 100%;
    height: 100%;
}

.running::after {
    content: "";
    position: absolute;
    left: 50%;
    bottom: -12px;
    width: 6px;
    height: 8px;
    margin-left: -3px;
    border-radius: 50%;
    background: #0a0e16;
}

.dock-sep {
    width: 2px;
    height: 84px;
    flex: none;
    margin: 0 9px;
    background: #1b2230;
}

.dock-wide {
    width: 85px;
    height: 88px;
    margin-left: -1px;
}

.dock-ij {
    width: 82px;
    height: 88px;
    margin-left: -5px;
}

.dock-preview {
    width: 80px;
    height: 78px;
    margin-left: -3px;
}

.dock-green {
    width: 91px;
    height: 90px;
    margin-left: -7px;
}

.dock-trash {
    width: 63px;
    height: 84px;
    margin-left: 19px;
}

.dock-sep-last {
    margin: 0 0 0 7px;
}

.cal-month {
    font-size: 13px;
    fill: #fff;
    text-anchor: middle;
}

.cal-day {
    font-family: "Liberation Sans", sans-serif;
    font-size: 38px;
    fill: #111;
    text-anchor: middle;
}

.office-letter {
    font-family: "Liberation Sans", sans-serif;
    font-size: 28px;
    font-weight: 700;
    fill: #fff;
    text-anchor: middle;
}

.term-prompt {
    font-family: "Liberation Mono", monospace;
    font-size: 16px;
    fill: #eee;
}

.ij-mark {
    font-family: "Liberation Mono", monospace;
    font-size: 24px;
    font-weight: 700;
    fill: #fff;
}
```
